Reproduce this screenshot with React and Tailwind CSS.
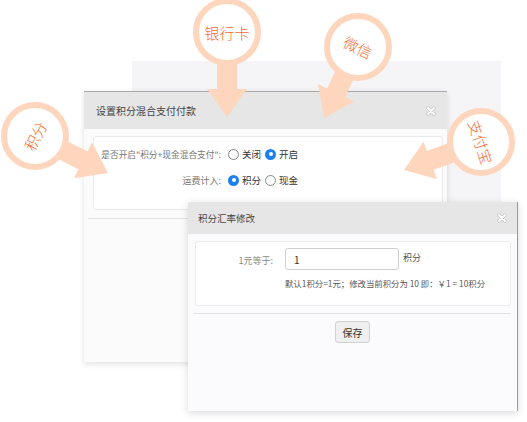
import React from 'react'

const font = { fontFamily: '"Noto Sans CJK SC", "Noto Sans", sans-serif' }

// arrow polygon from circle centre towards tip
function arrowPoints([cx, cy], [tx, ty], stem = 20, head = 40, headLen = 28) {
  const dx = tx - cx
  const dy = ty - cy
  const len = Math.hypot(dx, dy)
  const ux = dx / len
  const uy = dy / len
  const px = -uy
  const py = ux
  const bx = tx - ux * headLen
  const by = ty - uy * headLen
  const pts = [
    [cx + px * stem / 2, cy + py * stem / 2],
    [bx + px * stem / 2, by + py * stem / 2],
    [bx + px * head / 2, by + py * head / 2],
    [tx, ty],
    [bx - px * head / 2, by - py * head / 2],
    [bx - px * stem / 2, by - py * stem / 2],
    [cx - px * stem / 2, cy - py * stem / 2],
  ]
  return pts.map((p) => p.join(',')).join(' ')
}

const bubbles = [
  { c: [227, 32], tip: [227, 117], text: '银行卡', rot: 0 },
  { c: [358, 47], tip: [324, 118], text: '微信', rot: 25 },
  { c: [35, 136], tip: [108, 173], text: '积分', rot: -62 },
  { c: [481, 142], tip: [404, 170], text: '支付宝', rot: 72 },
]

function Callouts() {
  return (
    <svg className="pointer-events-none absolute inset-0" width="527" height="422">
      {bubbles.map((b) => (
        <polygon key={b.text + 'a'} points={arrowPoints(b.c, b.tip)} fill="#fed6bd" />
      ))}
      {bubbles.map((b) => (
        <g key={b.text}>
          <circle cx={b.c[0]} cy={b.c[1]} r="31" fill="#fff" stroke="#fed6bd" strokeWidth="6" />
          <text
            x={b.c[0]}
            y={b.c[1]}
            textAnchor="middle"
            dominantBaseline="central"
            fontSize="15"
            fontWeight="300"
            fill="#f86a2e"
            style={font}
            transform={`rotate(${b.rot} ${b.c[0]} ${b.c[1]})`}
          >
            {b.text}
          </text>
        </g>
      ))}
    </svg>
  )
}

function Radio({ checked, label }) {
  return (
    <span className="flex items-center gap-[3px]">
      {checked ? (
        <span className="flex h-[11px] w-[11px] items-center justify-center rounded-full bg-[#1e7ff0]">
          <span className="h-[4px] w-[4px] rounded-full bg-white" />
        </span>
      ) : (
        <span className="h-[11px] w-[11px] rounded-full border border-[#888] bg-white" />
      )}
      <span className="text-[9.5px] text-[#333]">{label}</span>
    </span>
  )
}

function Close() {
  return (
    <svg width="10" height="10" viewBox="0 0 10 10">
      <path d="M2 2 L8 8 M8 2 L2 8" stroke="#c4c4c4" strokeWidth="3.4" strokeLinecap="round" />
      <path d="M2 2 L8 8 M8 2 L2 8" stroke="#fff" strokeWidth="2" strokeLinecap="round" />
    </svg>
  )
}

export default function App() {
  return (
    <div className="relative h-[422px] w-[527px] overflow-hidden bg-white" style={font}>
      <div className="absolute left-[132px] top-[61px] h-[150px] w-[369px] bg-[#f5f4f6]" />

      <div className="absolute left-[84px] top-[91px] flex h-[271px] w-[363px] flex-col border-t border-[#a8a8a8] bg-[#fbfbfc] shadow-[0_2px_6px_rgba(0,0,0,0.12)]">
        <div className="flex h-[37px] items-center justify-between bg-[#e6e6e6] pl-[12px] pr-[11px]">
          <span className="text-[10px] text-[#444]">设置积分混合支付付款</span>
          <Close />
        </div>
        <div className="ml-[9px] mr-[4px] mt-[7px] flex h-[74px] flex-col gap-[12px] rounded-[3px] border border-[#eaeaea] bg-white pt-[10px]">
          <div className="flex items-center">
            <span className="w-[127px] whitespace-nowrap text-right text-[8.7px] text-[#777]">是否开启"积分+现金混合支付":</span>
            <div className="ml-[7px] flex items-center gap-[4px]">
              <Radio label="关闭" />
              <Radio checked label="开启" />
            </div>
          </div>
          <div className="flex items-center">
            <span className="w-[127px] text-right text-[9px] text-[#777]">运费计入:</span>
            <div className="ml-[7px] flex items-center gap-[4px]">
              <Radio checked label="积分" />
              <Radio label="现金" />
            </div>
          </div>
        </div>
        <div className="mx-[4px] mt-[8px] border-t border-[#e2e2e2]" />
      </div>

      <div className="absolute left-[188px] top-[202px] flex h-[209px] w-[330px] flex-col border-r border-[#9a9a9a] bg-[#fbfbfd] shadow-[0_2px_8px_rgba(0,0,0,0.15)]">
        <div className="flex h-[32px] items-center justify-between bg-[#e6e6e6] pl-[10px] pr-[10px]">
          <span className="text-[9.5px] text-[#444]">积分汇率修改</span>
          <Close />
        </div>
        <div className="ml-[7px] mr-[6px] mt-[7px] flex h-[65px] flex-col rounded-[3px] border border-[#ececec] bg-white pt-[6px]">
          <div className="flex items-start">
            <span className="mt-[6px] w-[77px] text-right text-[9px] text-[#888]">1元等于:</span>
            <div className="ml-[12px] flex h-[22px] w-[114px] items-center rounded-[3px] border border-[#cfcfcf] px-[8px] text-[10px] text-[#333]">
              1
            </div>
            <span className="ml-[4px] mt-[3px] text-[9px] text-[#555]">积分</span>
          </div>
          <div className="ml-[89px] mt-[7px] whitespace-nowrap text-[8.4px] text-[#555]">
            默认1积分=1元；修改当前积分为 10 即：￥1 = 10积分
          </div>
        </div>
        <div className="mx-[6px] mt-[7px] border-t border-[#e2e2e2]" />
        <div className="mt-[7px] flex justify-center">
          <button className="flex h-[22px] w-[35px] items-center justify-center rounded-[3px] border border-[#d2d2d2] bg-[#efefef] text-[10px] text-[#333]">
            保存
          </button>
        </div>
      </div>

      <Callouts />
    </div>
  )
}
